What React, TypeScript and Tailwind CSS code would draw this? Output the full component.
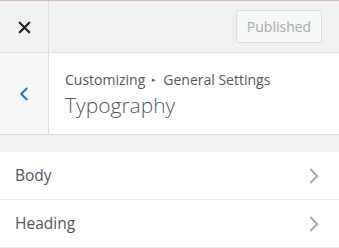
import { ChevronLeft, ChevronRight, X } from 'lucide-react';

const items = ['Body', 'Heading'];

export default function App() {
  return (
    <div className="h-[248px] w-[339px] overflow-hidden bg-white font-['Open_Sans',sans-serif] text-[#50575e]">
      <div className="h-px bg-[#d8b7c2]" />
      <div className="flex h-[52px] border-b border-[#dcdcde] bg-[#f0f0f1]">
        <button className="flex w-[49px] items-center justify-center pt-[2px] border-r border-[#dcdcde] text-[#1d2327]">
          <X size={19} strokeWidth={2.8} />
        </button>
        <div className="flex flex-1 items-center justify-end pr-[17px]">
          <button className="h-[33px] w-[86px] rounded-[3px] border border-[#dcdcde] bg-[#f6f7f7] text-[14px] text-[#a7aaad]">
            Published
          </button>
        </div>
      </div>
      <div className="flex h-[82px] border-b border-[#dcdcde]">
        <button className="flex w-[49px] items-center justify-center border-r border-[#dcdcde] bg-[#f6f7f7] text-[#2271b1]">
          <ChevronLeft size={22} strokeWidth={2.2} />
        </button>
        <div className="flex flex-col justify-center pl-4 pt-[2px]">
          <div className="flex items-center gap-[7px] text-[14px] leading-[18px] text-[#50575e]">
            <span>Customizing</span>
            <span className="text-[7px]">▸</span>
            <span>General Settings</span>
          </div>
          <div className="mt-[2px] text-[21px] font-light leading-[28px] text-[#50575e]">
            Typography
          </div>
        </div>
      </div>
      <div className="h-[17px] bg-[#f0f0f1]" />
      <ul>
        {items.map(item => (
          <li
            key={item}
            className="flex h-[48px] items-center justify-between border-b border-[#eaeaeb] pl-[15px] pr-[12px] text-[15.5px] text-[#50575e]"
          >
            <span>{item}</span>
            <ChevronRight size={26} strokeWidth={1.8} className="text-[#a7aaad]" />
          </li>
        ))}
      </ul>
    </div>
  );
}
